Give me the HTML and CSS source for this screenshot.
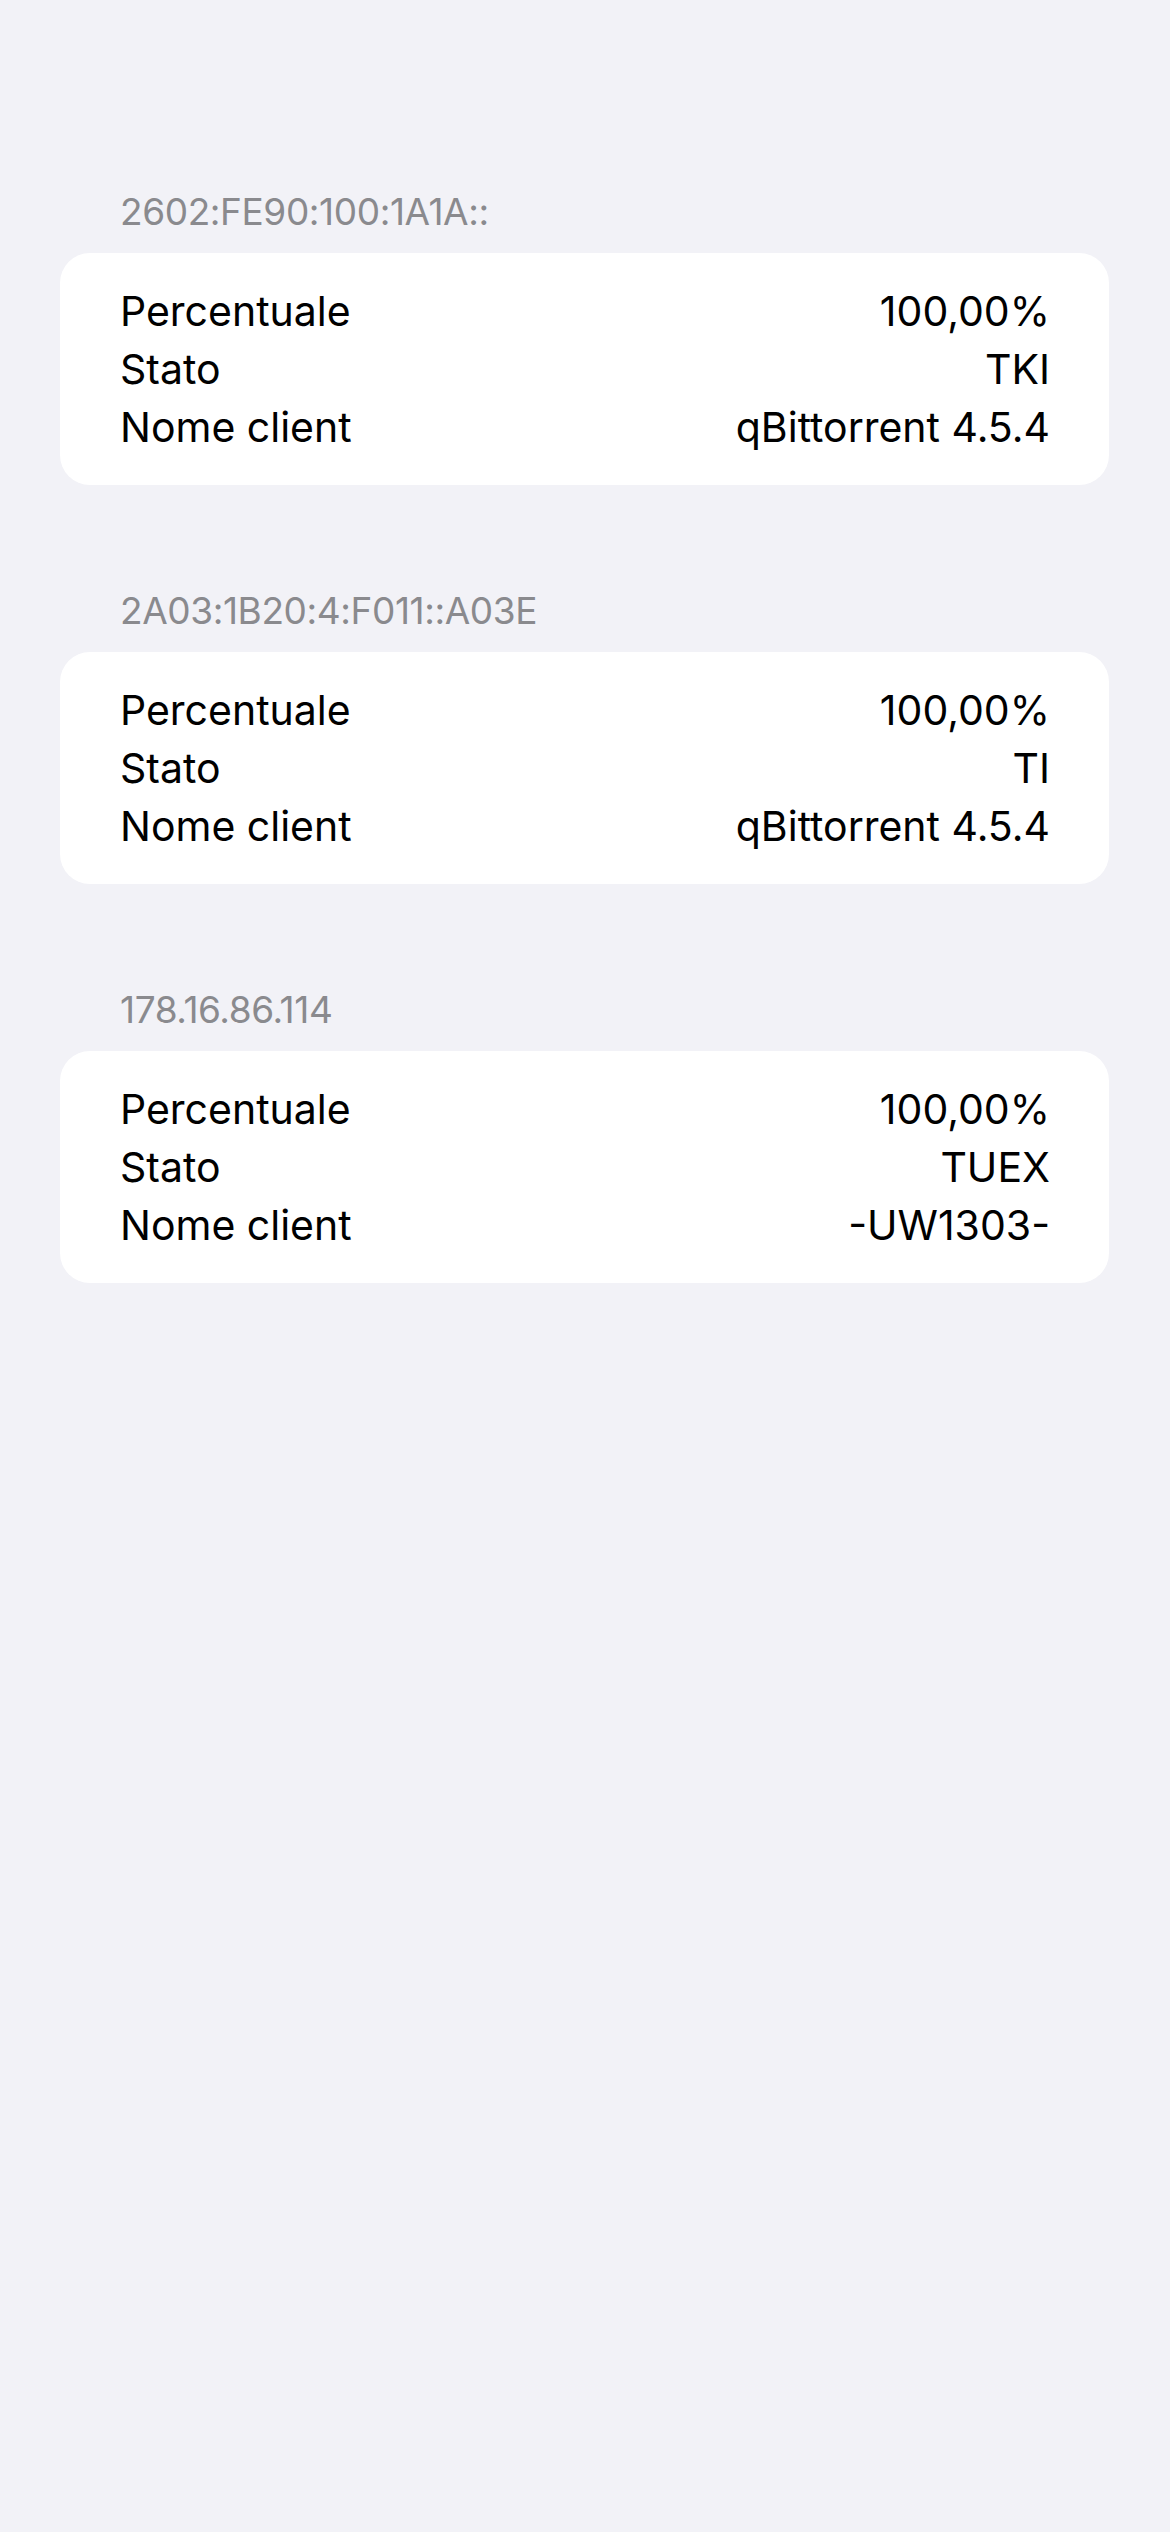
FILE: index.html
```html
<!DOCTYPE html>
<html lang="it">
<head>
<meta charset="utf-8">
<title>Peers</title>
<link rel="stylesheet" href="styles.css">
</head>
<body>
<main class="list">
  <section class="section">
    <h2 class="section-header">2602:FE90:100:1A1A::</h2>
    <div class="card">
      <div class="row"><span class="label">Percentuale</span><span class="value">100,00%</span></div>
      <div class="row"><span class="label">Stato</span><span class="value">TKI</span></div>
      <div class="row"><span class="label">Nome client</span><span class="value">qBittorrent 4.5.4</span></div>
    </div>
  </section>
  <section class="section">
    <h2 class="section-header">2A03:1B20:4:F011::A03E</h2>
    <div class="card">
      <div class="row"><span class="label">Percentuale</span><span class="value">100,00%</span></div>
      <div class="row"><span class="label">Stato</span><span class="value">TI</span></div>
      <div class="row"><span class="label">Nome client</span><span class="value">qBittorrent 4.5.4</span></div>
    </div>
  </section>
  <section class="section">
    <h2 class="section-header">178.16.86.114</h2>
    <div class="card">
      <div class="row"><span class="label">Percentuale</span><span class="value">100,00%</span></div>
      <div class="row"><span class="label">Stato</span><span class="value">TUEX</span></div>
      <div class="row"><span class="label">Nome client</span><span class="value">-UW1303-</span></div>
    </div>
  </section>
</main>
</body>
</html>
```

FILE: styles.css
```css
html, body {
  margin: 0;
  padding: 0;
  background: #f2f2f7;
}

body {
  font-family: Inter, "Noto Sans", "Liberation Sans", sans-serif;
  color: #000;
  min-height: 2532px;
}

.list {
  display: flex;
  flex-direction: column;
  gap: 104px;
  padding: 190px 61px 0 60px;
}

.section {
  display: flex;
  flex-direction: column;
}

.section-header {
  margin: 0 0 19px 0;
  padding: 0 60px;
  font-size: 37px;
  line-height: 44px;
  font-weight: 400;
  color: #8a8a8e;
  letter-spacing: -0.4px;
}

.card {
  background: #fff;
  border-radius: 30px;
  padding: 29px 59px 29px 60px;
  display: flex;
  flex-direction: column;
}

.row {
  display: flex;
  justify-content: space-between;
  align-items: baseline;
  height: 58px;
  font-size: 41px;
  line-height: 58px;
}

.value {
  text-align: right;
}
```
